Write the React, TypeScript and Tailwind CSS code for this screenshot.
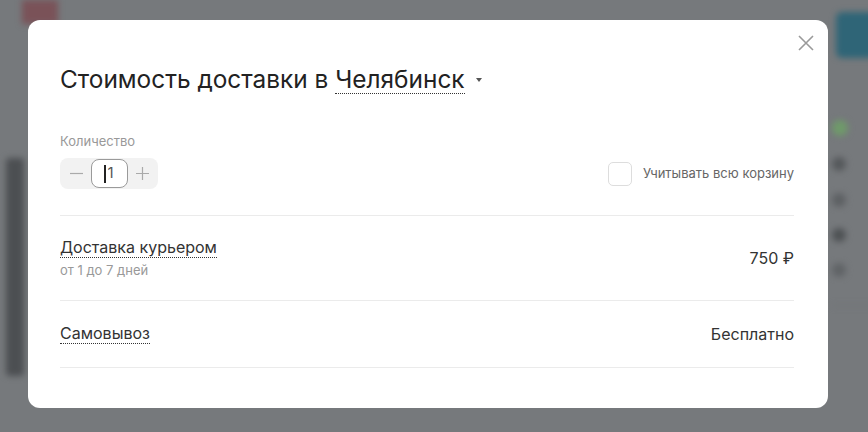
import { useState } from "react";

function CloseIcon() {
  return (
    <svg width="18" height="18" viewBox="0 0 18 18" fill="none" stroke="#9a9a9a" strokeWidth="1.6">
      <path d="M2 2l14 14M16 2L2 16" />
    </svg>
  );
}

function Row({ title, sub, price }: { title: string; sub?: string; price: string }) {
  return (
    <div className={`flex items-center justify-between border-b border-[#ebebeb] ${sub ? "h-[85px]" : "h-[67px]"}`}>
      <div className="flex flex-col">
        <span className="w-fit border-b border-dotted border-[#333] text-[16px] leading-[19px] text-[#333]">
          {title}
        </span>
        {sub && <span className="mt-[4px] text-[13px] leading-[16px] text-[#999]">{sub}</span>}
      </div>
      <span className="text-[16px] text-[#333]">{price}</span>
    </div>
  );
}

export default function App() {
  const [qty, setQty] = useState(1);
  const [whole, setWhole] = useState(false);

  return (
    <div className="relative h-[432px] w-[868px] overflow-hidden bg-[#76797c] font-['Inter',sans-serif]">
      {/* blurred page behind the overlay */}
      <div className="absolute inset-0 blur-[3px]">
        <div className="absolute left-[22px] top-0 h-[24px] w-[36px] bg-[#7a5258]" />
        <div className="absolute left-[6px] top-[158px] h-[218px] w-[18px] rounded-[4px] bg-[#4c4f52]" />
        <div className="absolute left-[836px] top-[12px] h-[46px] w-[40px] rounded-[6px] bg-[#2f6577]" />
        <div className="absolute left-[832px] top-[120px] h-[16px] w-[16px] rounded-full bg-[#6f9a6a]" />
        <div className="absolute left-[832px] top-[157px] h-[14px] w-[14px] rounded-full bg-[#55585b]" />
        <div className="absolute left-[832px] top-[193px] h-[14px] w-[14px] rounded-full bg-[#5d6063]" />
        <div className="absolute left-[832px] top-[228px] h-[14px] w-[14px] rounded-full bg-[#4e5154]" />
        <div className="absolute left-[832px] top-[263px] h-[14px] w-[14px] rounded-full bg-[#606366]" />
        <div className="absolute left-[832px] top-[305px] h-px w-[40px] bg-[#6c6f72]" />
      </div>

      <div className="absolute left-[28px] top-[20px] h-[388px] w-[800px] rounded-[12px] bg-white pl-[32px] pr-[34px] pt-[44px]">
        <button className="absolute right-[13px] top-[14px]">
          <CloseIcon />
        </button>

        <h2 className="flex items-center text-[24.4px] leading-[30px] text-[#222]">
          Стоимость доставки в&nbsp;
          <span className="border-b border-dotted border-[#333] leading-[28px]">Челябинск</span>
          <svg className="ml-[11px] mt-[2px]" width="6" height="4" viewBox="0 0 6 4" fill="#555">
            <path d="M0 0h6L3 4z" />
          </svg>
        </h2>

        <div className="mt-[39px] text-[13px] leading-[16px] text-[#999]">Количество</div>

        <div className="mt-[9px] flex items-center justify-between border-b border-[#ebebeb] pb-[26px]">
          <div className="flex h-[31px] w-[98px] items-center justify-between rounded-[8px] bg-[#f2f2f2] px-[2px]">
            <button
              className="flex h-full w-[28px] items-center justify-center"
              onClick={() => setQty(Math.max(1, qty - 1))}
            >
              <svg width="13" height="13" viewBox="0 0 13 13" stroke="#aaa" strokeWidth="1.2">
                <path d="M0 6.5h13" />
              </svg>
            </button>
            <div className="flex h-[29px] w-[37px] items-center justify-center rounded-[8px] border border-[#9a9a9a] bg-white text-[15px] text-[#555]">
              <span className="mr-[1px] h-[18px] w-[2px] bg-[#222]" />
              {qty}
            </div>
            <button
              className="flex h-full w-[28px] items-center justify-center"
              onClick={() => setQty(qty + 1)}
            >
              <svg width="13" height="13" viewBox="0 0 13 13" stroke="#aaa" strokeWidth="1.2">
                <path d="M0 6.5h13M6.5 0v13" />
              </svg>
            </button>
          </div>

          <label className="flex items-center gap-[11px]">
            <span
              className={`h-[24px] w-[24px] rounded-[5px] border ${whole ? "border-[#999] bg-[#eee]" : "border-[#ddd] bg-white"}`}
              onClick={() => setWhole(!whole)}
            />
            <span className="text-[13px] text-[#666]">Учитывать всю корзину</span>
          </label>
        </div>

        <Row title="Доставка курьером" sub="от 1 до 7 дней" price="750 ₽" />
        <Row title="Самовывоз" price="Бесплатно" />
      </div>
    </div>
  );
}
